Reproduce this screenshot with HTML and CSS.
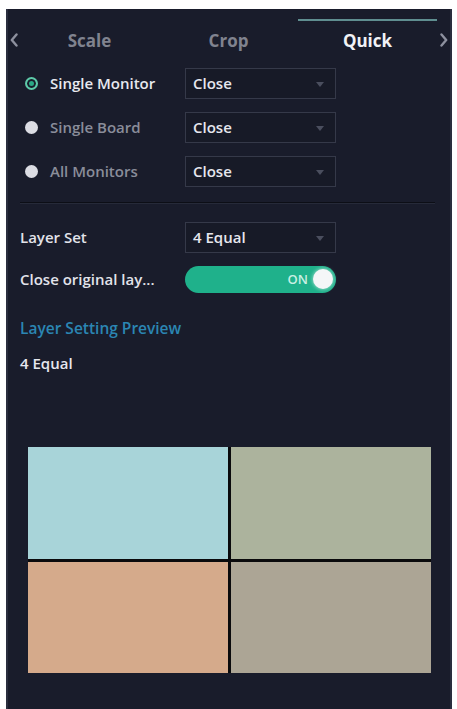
FILE: index.html
```html
<!DOCTYPE html>
<html lang="en">
<head>
  <meta charset="UTF-8" />
  <meta name="viewport" content="width=device-width, initial-scale=1.0" />
  <title>Layer Quick Setting</title>
  <link rel="stylesheet" href="styles.css">
</head>
<body>
  <div class="panel">
    <div class="tabs">
      <span class="arrow">
        <svg width="8" height="14" viewBox="0 0 8 14"><path d="M6.5 1.5 L1.8 7 L6.5 12.5" /></svg>
      </span>
      <div class="tab">Scale</div>
      <div class="tab">Crop</div>
      <div class="tab active">Quick</div>
      <span class="arrow">
        <svg width="8" height="14" viewBox="0 0 8 14"><path d="M1.5 1.5 L6.2 7 L1.5 12.5" /></svg>
      </span>
    </div>

    <div class="row">
      <label class="radio checked"><span class="dot"></span>Single Monitor</label>
      <div class="select">Close<span class="caret"></span></div>
    </div>
    <div class="row">
      <label class="radio"><span class="dot"></span>Single Board</label>
      <div class="select">Close<span class="caret"></span></div>
    </div>
    <div class="row">
      <label class="radio"><span class="dot"></span>All Monitors</label>
      <div class="select">Close<span class="caret"></span></div>
    </div>

    <div class="divider"></div>

    <div class="row">
      <span class="field">Layer Set</span>
      <div class="select">4 Equal<span class="caret"></span></div>
    </div>
    <div class="row short">
      <span class="field">Close original lay...</span>
      <div class="toggle"><span class="toggle-text">ON</span><span class="knob"></span></div>
    </div>

    <div class="preview-title">Layer Setting Preview</div>
    <div class="preview-name">4 Equal</div>

    <div class="preview">
      <div class="cell c1"></div>
      <div class="cell c2"></div>
      <div class="cell c3"></div>
      <div class="cell c4"></div>
    </div>
  </div>
</body>
</html>
```

FILE: styles.css
```css
html, body {
  height: 100%;
}
body {
  margin: 0;
  background: #fff;
  font-family: "Open Sans", "Liberation Sans", Arial, sans-serif;
  font-size: 15px;
  font-weight: 600;
  color: #e6e7ee;
}
.panel {
  box-sizing: border-box;
  margin: 9px 5px 0 6px;
  height: calc(100% - 9px);
  background: #191c2b;
  border-left: 2px solid #2a2e3e;
  border-right: 2px solid #2a2e3e;
  overflow: hidden;
}

/* tab strip */
.tabs {
  display: grid;
  grid-template-columns: 12px repeat(3, 139px) 1fr;
  height: 52px;
  align-items: start;
}
.arrow {
  display: flex;
  align-items: center;
  justify-content: center;
  height: 62px;
}
.arrow path {
  fill: none;
  stroke: #8d909e;
  stroke-width: 2.4;
  stroke-linecap: round;
  stroke-linejoin: round;
}
.tab {
  display: flex;
  align-items: center;
  justify-content: center;
  height: 38px;
  margin-top: 10px;
  border-top: 2px solid transparent;
  color: #80838f;
  font-size: 17px;
  font-weight: 700;
}
.tab.active {
  color: #f1f2f6;
  border-top-color: #5f8e90;
}

/* option rows */
.row {
  display: flex;
  align-items: center;
  height: 44px;
  padding-left: 12px;
}
.row.short {
  height: 40px;
}
.radio, .field {
  display: flex;
  align-items: center;
  width: 165px;
  color: #8a8d9a;
  white-space: nowrap;
}
.field {
  color: #e2e3ea;
}
.radio.checked {
  color: #e8e9ef;
}
.dot {
  box-sizing: border-box;
  flex: none;
  width: 13px;
  height: 13px;
  margin: 0 12px 0 5px;
  border-radius: 50%;
  background: #dcdde4;
}
.checked .dot {
  background: #2aa886;
  border: 2px solid #5ec9a9;
  box-shadow: inset 0 0 0 2px #191c2b;
}
.select {
  position: relative;
  box-sizing: border-box;
  display: flex;
  align-items: center;
  width: 151px;
  height: 31px;
  padding-left: 7px;
  border: 1px solid #353949;
  background: #171a27;
  color: #e6e7ee;
}
.caret {
  position: absolute;
  right: 11px;
  top: 13px;
  border-left: 4px solid transparent;
  border-right: 4px solid transparent;
  border-top: 5px solid #4a4e5e;
}
.divider {
  height: 1px;
  margin: 9px 15px 11px 12px;
  background: #0c0e16;
  border-bottom: 1px solid #262a39;
}

/* on/off switch */
.toggle {
  display: flex;
  align-items: center;
  justify-content: flex-end;
  box-sizing: border-box;
  width: 151px;
  height: 27px;
  padding-right: 3px;
  border-radius: 14px;
  background: #1fb18b;
}
.toggle-text {
  margin-right: 5px;
  color: #c9efe3;
  font-size: 13px;
}
.knob {
  width: 20px;
  height: 20px;
  border-radius: 50%;
  background: #f4f6f8;
  box-shadow: 0 0 4px rgba(255, 255, 255, 0.7);
}

.preview-title {
  margin: 18px 0 0 12px;
  color: #2b86b3;
  font-size: 15.5px;
}
.preview-name {
  margin: 14px 0 0 12px;
  color: #e6e7ee;
}

/* four equal layer preview */
.preview {
  display: grid;
  grid-template-columns: 1fr 1fr;
  grid-template-rows: 1fr 1fr;
  gap: 3px;
  width: 403px;
  height: 226px;
  margin: 74px 0 0 20px;
  background: #0a0a0c;
}
.cell.c1 { background: #a8d4d9; }
.cell.c2 { background: #acb39d; }
.cell.c3 { background: #d5aa8b; }
.cell.c4 { background: #aca595; }
```
